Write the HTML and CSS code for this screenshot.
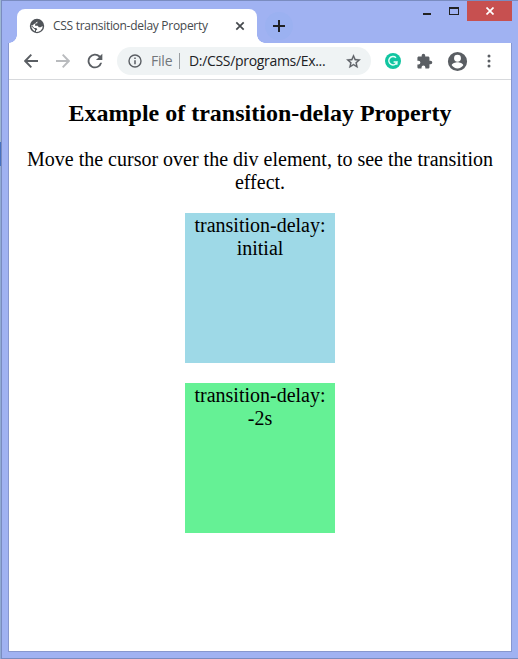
FILE: index.html
```
<!DOCTYPE html>
<html lang="en">
<head>
<meta charset="utf-8">
<title>CSS transition-delay Property</title>
<link rel="stylesheet" href="styles.css">
</head>
<body>
<div class="desktop">
<div class="window">
  <header class="titlebar">
    <div class="tab">
      <svg class="globe" width="16" height="16" viewBox="0 0 16 16"><circle cx="8" cy="8" r="7.200" fill="#505459"/><path d="M9.800 2.400L8.300 3.700V5.300L6.300 5.500L6 7.700H8.700L9.800 9.300H11.500L13.700 8.100L13.300 10.500L11.500 12.800L9.300 13.800L7 13.900V12.600L8.300 11.400L7.300 10.100H5.300L3.600 8.300L2.200 7.100L2.300 9.100L4 12L6 13.300L6.100 11.600L4.300 9.900L2.300 8.300Z" fill="#fff"/></svg>
      <span class="tab-title">CSS transition-delay Property</span>
      <svg class="tab-close" width="10" height="10" viewBox="0 0 10 10"><path d="M1.300 1.300L8.700 8.700M8.700 1.300L1.300 8.700" stroke="#45494d" stroke-width="1.700"/></svg>
    </div>
    <div class="new-tab"><svg width="12" height="12" viewBox="0 0 12 12"><path d="M6 0V12M0 6H12" stroke="#202124" stroke-width="2"/></svg></div>
    <div class="controls">
      <span class="minimize"></span><span class="maximize"></span>
      <span class="close"><svg width="8" height="8" viewBox="0 0 8 8"><path d="M.5.5L7.500 7.500M7.500.5L.5 7.500" stroke="#fff" stroke-width="1.700"/></svg></span>
    </div>
  </header>
  <div class="client">
    <nav class="toolbar">
      <svg class="back" width="14" height="14" viewBox="0 0 14 14"><path d="M14 7H1.500M7.300.7L1.200 7L7.300 13.300" fill="none" stroke="#5a5e63" stroke-width="1.900"/></svg>
      <svg class="forward" width="14" height="14" viewBox="0 0 14 14"><path d="M0 7H12.500M6.700.7L12.800 7L6.700 13.300" fill="none" stroke="#b9bbbe" stroke-width="1.900"/></svg>
      <svg class="reload" width="22" height="22" viewBox="0 0 24 24"><path d="M17.650 6.350A8 8 0 1 0 19.730 14H17.650A6 6 0 1 1 16.220 7.780L13 11H20V4Z" fill="#5a5e63"/></svg>
      <div class="address">
        <svg width="14" height="14" viewBox="0 0 14 14"><circle cx="7" cy="7" r="6" fill="none" stroke="#5a5e63" stroke-width="1.400"/><path d="M7 6.200V10.300M7 3.500V5" stroke="#5a5e63" stroke-width="1.500"/></svg>
        <span class="scheme">File</span>
        <span class="divider"></span>
        <span class="url">D:/CSS/programs/Ex...</span>
        <svg class="star" width="17" height="17" viewBox="0 0 24 24"><path d="M22 9.240l-7.190-.62L12 2 9.190 8.630 2 9.240l5.460 4.730L5.820 21 12 17.270 18.180 21l-1.630-7.030L22 9.240zM12 15.400l-3.760 2.270 1-4.280-3.320-2.880 4.380-.38L12 6.100l1.710 4.040 4.380.38-3.320 2.880 1 4.280L12 15.400z" fill="#5a5e63" stroke="#5a5e63" stroke-width=".4"/></svg>
      </div>
      <svg class="grammar" width="16" height="16" viewBox="0 0 16 16"><circle cx="8" cy="8" r="8" fill="#11c5a1"/><path d="M11 4.800A4.200 4.200 0 1 0 12 9H8.600M12 8.400L11.800 11.700" fill="none" stroke="#e9fffa" stroke-width="1.400"/></svg>
      <svg class="puzzle" width="17" height="17" viewBox="0 0 24 24"><path d="M20.500 11H19V7c0-1.100-.9-2-2-2h-4V3.500a2.500 2.500 0 0 0-5 0V5H4c-1.100 0-2 .9-2 2v3.800h1.500a2.700 2.700 0 0 1 0 5.400H2V20c0 1.100.9 2 2 2h3.800v-1.500a2.700 2.700 0 0 1 5.400 0V22H17c1.100 0 2-.9 2-2v-4h1.500a2.500 2.500 0 0 0 0-5z" fill="#5a5e63"/></svg>
      <svg class="profile" width="23" height="23" viewBox="0 0 24 24"><path d="M12 2a10 10 0 1 0 0 20 10 10 0 0 0 0-20zm0 3a3.600 3.600 0 1 1 0 7.200A3.600 3.600 0 0 1 12 5zm0 14.200a7.200 7.200 0 0 1-6-3.220c.03-1.990 4-3.080 6-3.080s5.970 1.090 6 3.080A7.200 7.200 0 0 1 12 19.200z" fill="#5a5e63"/></svg>
      <svg class="menu" width="4" height="14" viewBox="0 0 4 14"><g fill="#5a5e63"><circle cx="2" cy="2" r="1.500"/><circle cx="2" cy="7" r="1.500"/><circle cx="2" cy="12" r="1.500"/></g></svg>
    </nav>
    <main class="page">
      <h2>Example of transition-delay Property</h2>
      <p>Move the cursor over the div element, to see the transition effect.</p>
      <div class="box initial">transition-delay: initial</div>
      <div class="box negative">transition-delay: -2s</div>
    </main>
  </div>
</div>
</div>
</body>
</html>
```
FILE: styles.css
```
* { box-sizing: border-box; }
body { margin: 0; overflow: hidden; }
svg { display: block; flex: none; }
.desktop {
  width: 518px; height: 659px; padding-left: 1px;
  background: linear-gradient(#9eb8d2 0 142px, #4671c0 142px 166px, #91abd4 166px);
}
.window {
  display: flex; flex-direction: column; height: 659px; padding: 0 6px 6px;
  background: #a0b2f2; border: 1px solid #7a8cc0; border-right: 0;
}
.titlebar { display: flex; height: 42px; padding-left: 9px; }
.tab {
  position: relative; display: flex; align-items: center;
  width: 240px; height: 34px; margin-top: 8px; padding: 0 12px;
  background: #fff; border-radius: 8px 8px 0 0;
}
.tab::before, .tab::after {
  content: ""; position: absolute; bottom: 0; width: 8px; height: 8px;
}
.tab::before { left: -8px; background: radial-gradient(circle at 0 0, transparent 7.500px, #fff 8px); }
.tab::after { right: -8px; background: radial-gradient(circle at 100% 0, transparent 7.500px, #fff 8px); }
.tab-title {
  width: 160px; margin-left: 8px; color: #45494d; white-space: nowrap;
  font: 12px/18px "Open Sans", sans-serif; letter-spacing: -0.290px;
}
.tab-close { margin-left: 24px; }
.new-tab {
  display: flex; align-items: center; justify-content: center;
  width: 28px; height: 28px; margin: 11px 0 0 8px;
  background: #9bb1f1; border-radius: 50%;
}
.controls { display: flex; margin-left: auto; }
.minimize { width: 8px; height: 2px; margin-top: 12px; background: #222; }
.maximize { width: 10px; height: 8px; margin: 6px 0 0 18px; border: 1px solid #222; border-top-width: 2px; }
.close {
  display: flex; align-items: center; justify-content: center;
  width: 45px; height: 20px; margin-left: 8px; background: #c75050;
}
.client { flex: 1; width: 504px; background: #fff; border: 1px solid #8797ce; border-top: 0; }
.toolbar { display: flex; align-items: center; height: 37px; padding-left: 15px; border-bottom: 1px solid #d7d9dc; }
.forward { margin-left: 18px; }
.reload { margin-left: 14px; }
.address {
  display: flex; align-items: center; width: 254px; height: 28px;
  margin-left: 11px; padding-left: 11px; background: #eff3f4; border-radius: 14px;
  color: #202124; font: 14px/20px "Open Sans", sans-serif; white-space: nowrap;
}
.scheme { width: 22px; margin-left: 9px; color: #72767a; letter-spacing: -0.200px; }
.divider { width: 1px; height: 16px; margin-left: 6px; background: #9b9fa2; }
.url { width: 138px; margin-left: 9px; letter-spacing: -0.320px; }
.star { margin-left: 18px; }
.grammar { margin-left: 14px; }
.puzzle { margin-left: 15px; }
.profile { margin-left: 13px; }
.menu { margin-left: 18px; }
.page {
  padding: 0 8px; color: #000; text-align: center;
  font: 20px/23px "Liberation Serif", serif;
}
h2 { margin: 19px 0 21px; font-size: 24px; line-height: 28px; }
p { margin: 0 0 19px; }
.box { width: 150px; height: 150px; margin: 0 auto 20px; padding-top: 1px; }
.initial { background: #9ed9e7; }
.negative { background: #65f195; }
```
